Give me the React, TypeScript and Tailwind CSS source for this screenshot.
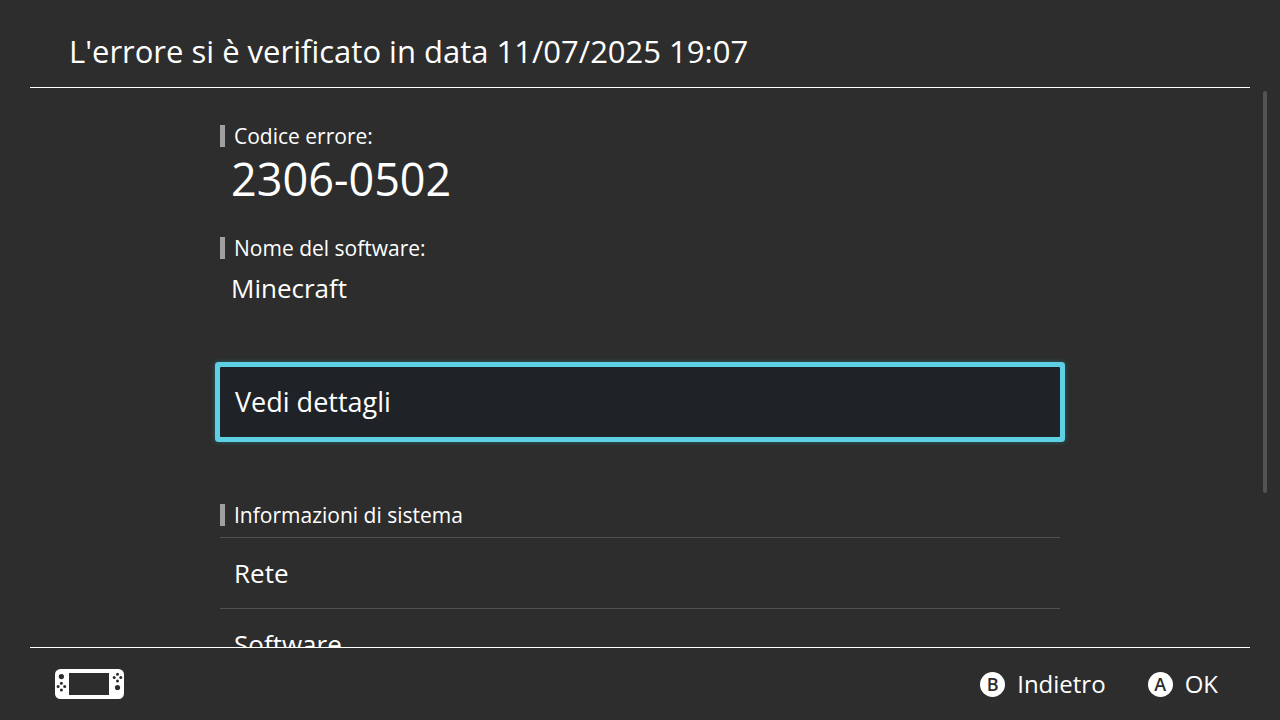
import type { ReactNode } from "react";

const systemItems = ["Rete", "Software"];

function SectionLabel({ children }: { children: ReactNode }) {
  return (
    <h2 className="flex h-[22px] items-center gap-[9px] text-[21px] leading-[22px]">
      <span className="h-full w-[5px] bg-[#a0a0a0]" />
      <span>{children}</span>
    </h2>
  );
}

function ConsoleIcon() {
  return (
    <svg width="69" height="30" viewBox="0 0 69 30" role="img" aria-label="Console">
      <rect width="69" height="30" rx="5.5" fill="#fff" />
      <g fill="#2d2d2d">
        <rect x="14" y="4" width="40" height="22" />
        <circle cx="6.4" cy="7.6" r="2.6" />
        <circle cx="6.4" cy="14.3" r="1.5" />
        <circle cx="6.4" cy="20.9" r="1.5" />
        <circle cx="3.1" cy="17.6" r="1.5" />
        <circle cx="9.7" cy="17.6" r="1.5" />
        <circle cx="62.5" cy="18.5" r="2.6" />
        <circle cx="62.5" cy="5.3" r="1.5" />
        <circle cx="62.5" cy="11.9" r="1.5" />
        <circle cx="59.2" cy="8.6" r="1.5" />
        <circle cx="65.8" cy="8.6" r="1.5" />
      </g>
    </svg>
  );
}

function Hint({ letter, label }: { letter: string; label: string }) {
  return (
    <button type="button" className="flex items-center gap-3 text-[24px] leading-8">
      <span className="flex size-[25px] items-center justify-center rounded-full bg-white text-[18px] leading-none font-semibold text-[#2d2d2d]">
        {letter}
      </span>
      {label}
    </button>
  );
}

export default function App() {
  return (
    <div className="flex h-screen flex-col bg-[#2d2d2d] font-['Open_Sans','Noto_Sans',sans-serif] font-normal text-white">
      <header className="mx-[30px] border-b border-white px-[39px] pt-[31px] pb-4">
        <h1 className="text-[31px] leading-10">L'errore si è verificato in data 11/07/2025 19:07</h1>
      </header>

      <div className="relative min-h-0 flex-1">
        <main className="h-full overflow-y-auto px-6 [scrollbar-width:none]">
          <div className="mx-auto max-w-[840px] pt-[37px]">
            <SectionLabel>Codice errore:</SectionLabel>
            <p className="mt-0.5 pl-[11px] text-[45px] leading-[60px]">2306-0502</p>
            <div className="mt-7">
              <SectionLabel>Nome del software:</SectionLabel>
            </div>
            <p className="mt-[11px] pl-[11px] text-[26px] leading-9">Minecraft</p>

            <button
              type="button"
              className="mt-[61px] flex h-[70px] w-full items-center rounded-[1px] bg-[#1f2328] px-[15px] text-[27px] leading-9 shadow-[0_0_0_5px_#5dd0e3,0_0_5px_5px_#2b6068]"
            >
              Vedi dettagli
            </button>

            <div className="mt-[67px]">
              <SectionLabel>Informazioni di sistema</SectionLabel>
            </div>
            <ul className="mt-[11px]">
              {systemItems.map((item) => (
                <li key={item} className="border-t border-[#505050]">
                  <button type="button" className="flex h-[70px] w-full items-center px-[14px] text-[26px] leading-9">
                    {item}
                  </button>
                </li>
              ))}
            </ul>
          </div>
        </main>
        <div className="absolute top-[3px] right-[13px] h-[72%] w-1 rounded-full bg-[#535353]" />
      </div>

      <footer className="mx-[30px] flex h-[73px] items-center justify-between border-t border-white pr-8 pl-[25px]">
        <ConsoleIcon />
        <div className="flex items-center gap-[42px]">
          <Hint letter="B" label="Indietro" />
          <Hint letter="A" label="OK" />
        </div>
      </footer>
    </div>
  );
}
